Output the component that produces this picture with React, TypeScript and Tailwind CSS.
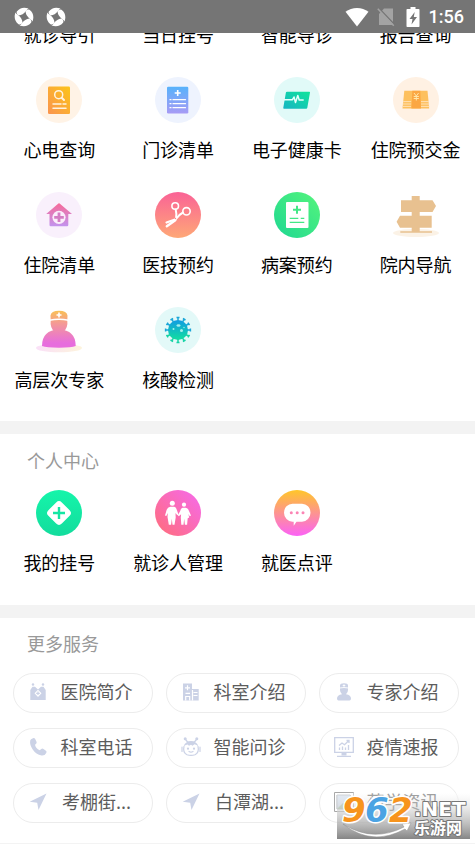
import React from 'react'

interface Item {
  label: string
  icon?: React.ReactNode
}

interface DiscProps {
  id: string
  from: string
  to: string
  children: React.ReactNode
  bg?: string
  diagonal?: boolean
}

// 46px service icon: a round backdrop (flat, or the gradient itself) with a drawing on top
function Disc({ id, from, to, bg, diagonal, children }: DiscProps) {
  return (
    <svg viewBox="0 0 46 46" className="size-[46px]" aria-hidden="true">
      <defs>
        <linearGradient id={id} x1={diagonal ? '1' : '0'} y1="0" x2="0" y2="1">
          <stop offset="0" stopColor={from} />
          <stop offset="1" stopColor={to} />
        </linearGradient>
      </defs>
      <circle cx="23" cy="23" r="23" fill={bg ?? `url(#${id})`} />
      {children}
    </svg>
  )
}

const EcgSearch = () => (
  <Disc id="ecg" from="#fcc419" to="#fa9450" bg="#fff3e6" diagonal>
    <rect x="12" y="9.5" width="22" height="27.5" rx="1.2" fill="url(#ecg)" />
    <g fill="none" stroke="#fff3e0" strokeWidth="1.5" strokeLinecap="round">
      <circle cx="22.7" cy="17.7" r="4" />
      <path d="M25.7 20.7l2.3 2.3" strokeWidth="2" />
      <path d="M17 27h8M27 27h3M17 31.3h13" />
    </g>
  </Disc>
)

const ClinicList = () => (
  <Disc id="clinic" from="#57b2fb" to="#a79bf5" bg="#eef3fe">
    <rect x="12" y="9.7" width="21.3" height="26.7" rx="1.2" fill="url(#clinic)" />
    <path d="M22.7 13v6M19.7 16h6" stroke="#fff" strokeWidth="1.6" />
    <path
      d="M15 22.7h1M15 26.7h1M15 30.7h1M18 22.7h12.5M18 26.7h12.5M18 30.7h12.5"
      stroke="#fff"
      strokeWidth="1.3"
      strokeLinecap="round"
    />
  </Disc>
)

const HealthCard = () => (
  <Disc id="card" from="#10e59a" to="#17b4c4" bg="#e1faf8" diagonal>
    <path d="M13 14.7h22.3q.8 0 .7.9l-2.7 15.2q-.2.9-1.1.9H10q-.9 0-.7-.9l2.6-15.2q.2-.9 1.1-.9z" fill="url(#card)" />
    <path
      d="M10 22.7h8.500l1.500-2.700 1.500 5.500 2.300-7 1.400 4.500h4.500"
      fill="none"
      stroke="#e6fffb"
      strokeWidth="1.500"
      strokeLinejoin="round"
    />
  </Disc>
)

const Deposit = () => (
  <Disc id="deposit" from="#fdb34a" to="#fcab52" bg="#fff1e3">
    <path d="M11.3 13.7h23.2l1.7 17.8H9.5z" fill="#fdc05e" />
    <path d="M10.2 24.6h8M9.8 27h8.4M9.6 29.4h8.6M28 24.6h8M28 27h8.2M28 29.4h8.4" stroke="#ffe0b5" strokeWidth="1" />
    <path d="M19.3 13.7h8l.7 17.8h-9.6z" fill="#fba743" />
    <path d="M21 16l2.3 3 2.3-3M20.7 19.5h5.2M20.7 21.5h5.2M23.3 19v4.5" fill="none" stroke="#ffe6a8" strokeWidth="1" />
  </Disc>
)

const WardList = () => (
  <Disc id="ward" from="#f76b98" to="#c393ee" bg="#f9f0fc">
    <path d="M22.4 11.4q.6-.5 1.2 0L36 22h-3.7v11q0 1.2-1.2 1.2H14.7q-1.2 0-1.2-1.2V22h-3.3z" fill="url(#ward)" />
    <circle cx="23" cy="25.3" r="6.6" fill="#faeefb" />
    <path d="M23 20.5v9.600M18.2 25.3h9.600" stroke="#d47dc4" strokeWidth="2.8" />
  </Disc>
)

const MedTech = () => (
  <Disc id="tech" from="#fa6396" to="#fea877">
    <g fill="none" stroke="#fff" strokeLinecap="round">
      <circle cx="20.2" cy="14" r="3.3" strokeWidth="1.6" />
      <circle cx="31.5" cy="19.3" r="3.7" strokeWidth="1.6" />
      <path d="M20.7 17.5q1 4 .4 8.5" strokeWidth="2" />
      <path d="M28 20.5q-4 2-7.5 7" strokeWidth="2" />
      <path d="M20 27.5l-8.5 3" strokeWidth="2.2" />
      <path d="M20.3 28.2l-8.5 6" strokeWidth="2.4" />
    </g>
    <circle cx="20.5" cy="26.5" r="0.7" fill="#fb8a88" />
  </Disc>
)

const CaseBooking = () => (
  <Disc id="case" from="#55f57c" to="#1ed792" diagonal>
    <rect x="12" y="10" width="22.5" height="26" rx="1" fill="#fff" />
    <path d="M23 13.7v8M19 17.7h8" stroke="#43e886" strokeWidth="2" />
    <path d="M15.7 26.3h8.6M26.7 26.3h3.6M15.7 30.3h14.6" stroke="#43e886" strokeWidth="1.3" />
  </Disc>
)

const Signpost = () => (
  <svg viewBox="0 0 46 46" className="size-[46px]" aria-hidden="true">
    <ellipse cx="23" cy="41" rx="23" ry="4" fill="#fbf2e6" />
    <g fill="#e8c190">
      <path d="M18.7 4h8v36h-8zM7.3 39.3H39v1.4H7.3z" />
      <path d="M8 8.3h31.5L43 14l-3.500 6H8zM38.7 23.7v12H7l-3.4-6 3.4-6z" />
    </g>
  </svg>
)

const Expert = () => (
  <svg viewBox="0 0 46 46" className="size-[46px]" aria-hidden="true">
    <defs>
      <linearGradient id="expert" gradientUnits="userSpaceOnUse" x1="23" y1="3" x2="23" y2="36">
        <stop offset="0" stopColor="#f9c352" />
        <stop offset="0.4" stopColor="#f49a94" />
        <stop offset="1" stopColor="#e76ddd" />
      </linearGradient>
      <linearGradient id="expertBase" x1="0" y1="0" x2="1" y2="0">
        <stop offset="0" stopColor="#fae0f8" />
        <stop offset="1" stopColor="#fdf4dc" />
      </linearGradient>
    </defs>
    <ellipse cx="23" cy="41" rx="23" ry="4.3" fill="url(#expertBase)" />
    <g fill="url(#expert)">
      <path d="M14.7 14L14.5 8.500Q15 3.700 23 3.700T31.500 8.500L31.300 14q1 6.500-4.300 11.500h-8q-5.300-5-4.300-11.500z" />
      <path d="M6 39q0-16 17-16.500Q39.700 23 39.700 39q-4 1.700-16.700 1.700T6 39z" />
    </g>
    <path d="M13.500 13.300q9.500-2.200 19 0" fill="none" stroke="#fff" strokeWidth="1.5" />
    <path d="M23 5.500v5M20.500 8h5" stroke="#fff" strokeWidth="1.6" />
  </svg>
)

const SPIKES = [0, 30, 60, 90, 120, 150, 180, 210, 240, 270, 300, 330]

const Virus = () => (
  <Disc id="virus" from="#109be3" to="#12df9f" bg="#e3f9f8">
    <circle cx="23" cy="23" r="10" fill="url(#virus)" />
    {SPIKES.map((angle) => (
      <path
        key={angle}
        d="M23 14v-3.5M21.5 10.600h3"
        stroke={angle > 90 && angle < 270 ? '#16d3a6' : '#1aa6d8'}
        strokeWidth="1.5"
        transform={`rotate(${angle} 23 23)`}
      />
    ))}
    <g fill="#a5f0ec">
      <ellipse cx="23.5" cy="18.5" rx="2" ry="1.2" />
      <circle cx="18.5" cy="22" r="1" />
      <circle cx="26.5" cy="23.5" r="1.5" />
      <circle cx="29" cy="20.5" r="0.7" />
    </g>
  </Disc>
)

const MyBooking = () => (
  <Disc id="booking" from="#15f5aa" to="#13dc9d">
    <rect x="13.5" y="13.5" width="19" height="19" rx="4" fill="#fff" transform="rotate(45 23 23)" />
    <path d="M23 17v12M17 23h12" stroke="#14e6a3" strokeWidth="2.4" />
  </Disc>
)

const Patients = () => (
  <Disc id="patients" from="#f66aee" to="#ff6d78" diagonal>
    <g fill="#fff">
      <circle cx="17.3" cy="13.3" r="2.5" />
      <circle cx="29" cy="14.7" r="2.1" />
      <path d="M15.3 16.7h4q2 .6 2.5 3.3l1.7 4.5-1.2.8-1.8-2.3.2 4.5-1.2 7.2h-2l-.7-6-.7 6h-2.3L12.5 27l.3-4-1.5 3-1.3-.6 1.6-5.400q1-2.700 3.700-3.300z" />
      <path d="M27.5 17.7h3.2q2.600.5 3.400 3.500l1.900 4.300-1.200.8-1.500-2.300.9 3.500-1.500.8-.6 6.400h-2.200l-.7-6-.7 6h-2.200l-.5-7 .3-3.400-2.300 2-1-1 2.300-4q.7-3 2.400-3.600z" />
    </g>
  </Disc>
)

const Review = () => (
  <Disc id="review" from="#ffc629" to="#fb62f6">
    <path d="M18.5 13.7H28a8.500 9 0 0 1 0 18h-5.500l-2.800 4v-4h-1.200a8.500 9 0 0 1 0-18z" fill="#fff" />
    <g fill="#fb84b4">
      <circle cx="17.3" cy="22.7" r="1.5" />
      <circle cx="23.2" cy="22.7" r="1.5" />
      <circle cx="29" cy="22.7" r="1.5" />
    </g>
  </Disc>
)

function Glyph({ children }: { children: React.ReactNode }) {
  return (
    <svg viewBox="0 0 20 20" className="size-5 shrink-0" fill="currentColor" aria-hidden="true">
      {children}
    </svg>
  )
}

const Hospital = () => (
  <Glyph>
    <circle cx="5" cy="2.5" r="1.2" />
    <circle cx="15" cy="2.5" r="1.2" />
    <path d="M2.300 8L4.500 4.700h2.500L10 7.500l3-2.800h2.500L17.700 8v10H2.300z" />
    <path d="M10 7.7l3.500 3.600-3.500 3.600-3.500-3.600z" fill="#fff" />
    <path d="M10 9.5v3.6M8.2 11.300h3.600" stroke="currentColor" strokeWidth="1.2" />
  </Glyph>
)

const Department = () => (
  <Glyph>
    <path d="M2 1.5h9V7h6.700v11.500H2z" />
    <path
      d="M6.5 3.3v5M4 5.8h5M4.500 11.300H9M12.500 10.500h4M12.500 13.500h4M11.500 8v10.500M4.700 18.500v-4h4v4"
      fill="none"
      stroke="#fff"
      strokeWidth="1.2"
    />
  </Glyph>
)

const Specialist = () => (
  <Glyph>
    <path d="M6 3.500q0-2.300 4-2.300t4 2.300V8q0 2.700-2 4.200 5 .7 5 4.300 0 2-1.500 2h-11Q3 18.500 3 16.500q0-3.600 5-4.300Q6 10.700 6 8z" />
    <path d="M5.700 6q4.300-1 8.600 0M10 2.300v2.500M8.700 3.500h2.600" fill="none" stroke="#fff" strokeWidth="0.9" />
  </Glyph>
)

const Phone = () => (
  <Glyph>
    <path d="M5 1.200q1.400-.5 2.200.8l1.300 2.700q.6 1.300-.6 2.200L7 7.700q.7 3.500 4.700 5.600l1.600-1.300q1-.8 2.200 0l2.400 1.700q1.300 1 .3 2.300-1.300 2.800-4.600 2.500Q8 17.500 4.700 12.500 1.500 7.700 2.200 3.500 2.500 2 5 1.200z" />
  </Glyph>
)

const Robot = () => (
  <Glyph>
    <circle cx="4.2" cy="1.8" r="1.5" />
    <circle cx="15.8" cy="1.8" r="1.5" />
    <path d="M4.500 2.500L7 5.500M15.500 2.500L13 5.500" stroke="currentColor" strokeWidth="1.2" />
    <path d="M2.500 9.500Q4.500 4 10 4t7.500 5.500q-2-2-4-2.300l-2 1.500-1.500-1-2 1-1.500-1.200q-2.500.3-4 2z" />
    <path
      d="M3 9.500q-1.500 6 3 8.200 4 1.500 8 0 4.500-2.200 3-8.200M1 10v4.500M19 10v4.500M8 14.500q2 1.300 4 0"
      fill="none"
      stroke="currentColor"
      strokeWidth="1.2"
      strokeLinecap="round"
    />
    <circle cx="7" cy="11.7" r="1.1" />
    <circle cx="13" cy="11.7" r="1.1" />
  </Glyph>
)

const Report = () => (
  <Glyph>
    <path
      d="M.7.700h18.600v14.600H.7zM5 8.500l3-2.500 2.500 1.700L15 3.500M12.500 3.500H15V6M5.500 13v-2.500M8.500 13V9.500M11.500 13v-2.500M14.500 13V8M3 19.300h14"
      fill="none"
      stroke="currentColor"
      strokeWidth="1.3"
    />
    <path d="M7.500 15.500h5v3h-5z" />
  </Glyph>
)

const Plane = () => (
  <Glyph>
    <path d="M18.500 1.500L10.500 18 9.200 10.700 1.700 9.700z" />
  </Glyph>
)

const MissingImage = () => (
  <Glyph>
    <path d="M.5.500h19v19H.5z" fill="#fff" stroke="#a8a8a8" />
    <path d="M3 3h13l1.500 2v12H3z" fill="#cfdced" stroke="#b0b4ba" />
    <path d="M3 17l6-6 8 6z" fill="#9dbd9b" />
  </Glyph>
)

const services: Item[] = [
  { label: '就诊导引' },
  { label: '当日挂号' },
  { label: '智能导诊' },
  { label: '报告查询' },
  { label: '心电查询', icon: <EcgSearch /> },
  { label: '门诊清单', icon: <ClinicList /> },
  { label: '电子健康卡', icon: <HealthCard /> },
  { label: '住院预交金', icon: <Deposit /> },
  { label: '住院清单', icon: <WardList /> },
  { label: '医技预约', icon: <MedTech /> },
  { label: '病案预约', icon: <CaseBooking /> },
  { label: '院内导航', icon: <Signpost /> },
  { label: '高层次专家', icon: <Expert /> },
  { label: '核酸检测', icon: <Virus /> }
]

const personal: Item[] = [
  { label: '我的挂号', icon: <MyBooking /> },
  { label: '就诊人管理', icon: <Patients /> },
  { label: '就医点评', icon: <Review /> }
]

const more: Item[] = [
  { label: '医院简介', icon: <Hospital /> },
  { label: '科室介绍', icon: <Department /> },
  { label: '专家介绍', icon: <Specialist /> },
  { label: '科室电话', icon: <Phone /> },
  { label: '智能问诊', icon: <Robot /> },
  { label: '疫情速报', icon: <Report /> },
  { label: '考棚街...', icon: <Plane /> },
  { label: '白潭湖...', icon: <Plane /> },
  { label: '药学资讯', icon: <MissingImage /> }
]

function Swirl() {
  return (
    <svg viewBox="0 0 20 20" className="size-5" fill="#fff" aria-hidden="true">
      {[0, 90, 180, 270].map((angle) => (
        <path
          key={angle}
          d="M2.800 4.500Q7-1 14.500 1.400q-1.300.6-2.500 2.600Q9 8 4.600 8.500 2 7.300 2.800 4.500z"
          transform={`rotate(${angle} 10 10)`}
        />
      ))}
    </svg>
  )
}

function StatusBar() {
  return (
    <header className="relative z-10 flex h-[33px] items-center justify-between bg-[#757575] pr-[11px] pl-[14px]">
      <div className="flex gap-3">
        <Swirl />
        <Swirl />
      </div>
      <div className="flex items-center">
        <svg viewBox="0 0 24 20" className="mr-2 h-5 w-6" fill="#fff" aria-hidden="true">
          <path d="M12 19.500L.5 4.800Q5.500 1 12 1t11.500 3.800z" />
        </svg>
        <svg viewBox="0 0 18 20" className="mr-[11px] h-5 w-[18px]" aria-hidden="true">
          <path d="M7 1.500h9V18H2V7z" fill="#a3a3a3" />
          <path d="M1.500.8L18 18" stroke="#757575" strokeWidth="1.5" />
          <path d="M.8 1.800l16 17" stroke="#a3a3a3" strokeWidth="1.5" />
        </svg>
        <svg viewBox="0 0 14 20" className="mr-[9px] h-5 w-[14px]" aria-hidden="true">
          <path d="M4.500 0h5v2h3.200q.8 0 .8.800v16.400q0 .8-.8.800H1.300q-.8 0-.8-.800V2.800q0-.8.8-.8h3.200z" fill="#fff" />
          <path d="M8.700 5L3.500 12h3l-1 5.500L11 10H7.800z" fill="#757575" />
        </svg>
        <span className="font-[Roboto] text-lg leading-5 font-medium text-white">1:56</span>
      </div>
    </header>
  )
}

function IconGrid({ items }: { items: Item[] }) {
  return (
    <div className="grid grid-cols-4 gap-y-[29px]">
      {items.map((item) => (
        <button key={item.label} className="flex flex-col items-center gap-[13px] whitespace-nowrap">
          {item.icon}
          <span className="text-lg leading-[27px] text-black">{item.label}</span>
        </button>
      ))}
    </div>
  )
}

function Watermark() {
  return (
    <svg
      viewBox="0 0 134 46"
      className="absolute right-[5px] bottom-[5px] h-[46px] w-[134px] overflow-visible"
      role="img"
      aria-label="962.NET 乐游网"
    >
      <defs>
        <linearGradient id="shade" x1="0" y1="0" x2="0" y2="1">
          <stop offset="0" stopColor="#ffffff" stopOpacity="0.4" />
          <stop offset="0.3" stopColor="#dddddd" stopOpacity="0.6" />
          <stop offset="1" stopColor="#858585" />
        </linearGradient>
      </defs>
      <rect x="1" width="133" height="46" fill="url(#shade)" />
      <path d="M7 31q30 19 61 3l-2-3 9-1-4 8-2-2Q36 54 7 31z" fill="#fff" stroke="#8e8e8e" strokeWidth="0.5" />
      <g
        fontFamily="DejaVu Sans"
        fontWeight="700"
        fontStyle="italic"
        fontSize="34"
        stroke="#fff"
        strokeWidth="3"
        strokeLinejoin="round"
        paintOrder="stroke"
      >
        <text x="6" y="29" fill="#f7941d">9</text>
        <text x="29" y="29" fill="#4ba3e3">6</text>
        <text x="53" y="29" fill="#f7941d">2</text>
      </g>
      <g fill="#fff" stroke="#777" strokeWidth="2" strokeLinejoin="round" paintOrder="stroke" fontWeight="700">
        <text x="78" y="23" fontFamily="DejaVu Sans" fontSize="20">.NET</text>
        <text x="78" y="41" fontFamily="Noto Sans CJK SC" fontSize="16">乐游网</text>
      </g>
    </svg>
  )
}

export default function App() {
  return (
    <div className="relative bg-white font-['Noto_Sans_CJK_SC',sans-serif]">
      <StatusBar />
      <main>
        {/* first row is scrolled under the status bar */}
        <section className="-mt-3 pb-7">
          <IconGrid items={services} />
        </section>

        <section className="border-t-[13px] border-[#f3f3f3] pt-[13px] pb-[29px]">
          <h2 className="mb-4 pl-[27px] text-lg leading-[27px] text-[#999]">个人中心</h2>
          <IconGrid items={personal} />
        </section>

        <section className="border-t-[13px] border-[#f3f3f3] pt-3 pb-5">
          <h2 className="mb-4 pl-[27px] text-lg leading-[27px] text-[#999]">更多服务</h2>
          <div className="grid grid-cols-3 gap-x-[13px] gap-y-[15px] pr-4 pl-[13px]">
            {more.map((item) => (
              <button
                key={item.label}
                className="flex h-10 items-center gap-3 rounded-full border border-[#ececec] pr-[19px] pb-[3px] pl-[14px] whitespace-nowrap text-[#cbd2e6]"
              >
                {item.icon}
                <span className="flex-1 text-center text-lg leading-[27px] text-[#5c5c5c]">{item.label}</span>
              </button>
            ))}
          </div>
        </section>
      </main>
      <footer className="border-t border-[#f3f3f3]" />
      <Watermark />
    </div>
  )
}
